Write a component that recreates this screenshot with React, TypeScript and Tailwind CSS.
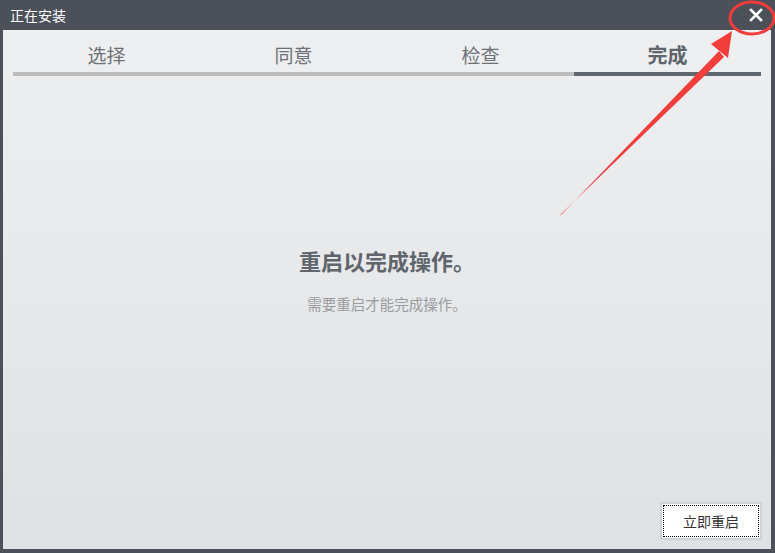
import React from "react";

const steps = [
  { label: "选择", done: true },
  { label: "同意", done: true },
  { label: "检查", done: true },
  { label: "完成", done: false },
];

const font = "font-['Microsoft_YaHei','Noto_Sans_CJK_SC',sans-serif]";

export default function App() {
  return (
    <div className={`relative w-[775px] h-[553px] overflow-hidden bg-[#4c5159] ${font}`}>
      {/* title bar */}
      <div className="flex h-[30px] items-center justify-between pl-[10px] pr-[11px]">
        <span className="text-[14px] text-white">正在安装</span>
        <svg width="16" height="16" viewBox="0 0 16 16">
          <path d="M3 3 L13 13 M13 3 L3 13" stroke="#fff" strokeWidth="2.6" strokeLinecap="square" />
        </svg>
      </div>

      {/* body */}
      <div className="ml-[3px] mr-[4px] flex h-[519px] flex-col bg-gradient-to-b from-[#eeeff1] to-[#dfe2e4]">
        <div className="mx-[10px] mt-[8px] grid grid-cols-4">
          {steps.map((s, i) => (
            <div key={s.label} className="flex flex-col items-center">
              <span
                className={
                  i === 3
                    ? "text-[20px] font-bold leading-[34px] text-[#5f656b]"
                    : "text-[19px] leading-[34px] text-[#6e7277]"
                }
              >
                {s.label}
              </span>
              <div className={`h-[4px] w-full ${s.done ? "bg-[#bcbcbc]" : "bg-[#60676e]"}`} />
            </div>
          ))}
        </div>

        <div className="flex flex-1 flex-col items-center pt-[169px]">
          <h1 className="text-[22px] font-bold leading-[30px] text-[#5f656b]">重启以完成操作。</h1>
          <p className="mt-[18px] text-[14.5px] text-[#9a9c9f]">需要重启才能完成操作。</p>
        </div>

        <div className="flex justify-end pb-[9px] pr-[9px]">
          <button className="h-[38px] w-[102px] border-2 border-[#d0d3d6] bg-white p-[1px]">
            <div className="flex h-full w-full items-center justify-center border border-dotted border-black text-[14px] text-[#333]">
              立即重启
            </div>
          </button>
        </div>
      </div>

      {/* red annotation */}
      <svg className="pointer-events-none absolute left-0 top-0" width="775" height="553">
        <ellipse cx="752" cy="18" rx="22" ry="16" fill="none" stroke="#f03c3c" strokeWidth="3" />
        <polygon points="559,216 562,214 719,51 724,57" fill="#f23d3d" />
        <polygon points="732,31 711,44 728,58" fill="#f23d3d" />
      </svg>
    </div>
  );
}
